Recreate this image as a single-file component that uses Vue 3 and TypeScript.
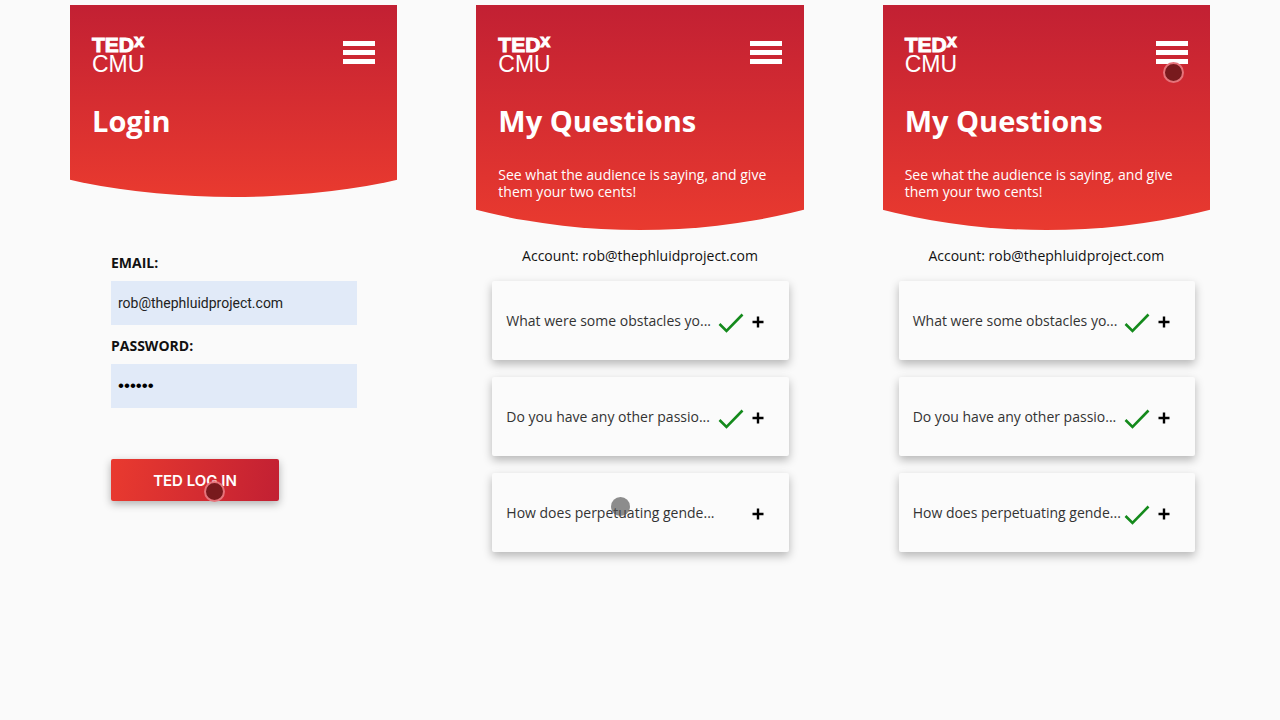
<script setup lang="ts">
import { ref } from 'vue'

interface Question {
  text: string
  answered: boolean
  touched?: boolean
}
interface Screen {
  id: string
  title: string
  kind: 'login' | 'questions'
  menuTouched?: boolean
  questions: Question[]
}

const account = 'rob@thephluidproject.com'
const email = ref(account)
const password = ref('secret')

const makeQuestions = (lastAnswered: boolean): Question[] => [
  { text: 'What were some obstacles yo...', answered: true },
  { text: 'Do you have any other passio...', answered: true },
  { text: 'How does perpetuating gende...', answered: lastAnswered, touched: !lastAnswered },
]

const screens: Screen[] = [
  { id: 'login', title: 'Login', kind: 'login', questions: [] },
  { id: 'before', title: 'My Questions', kind: 'questions', questions: makeQuestions(false) },
  { id: 'after', title: 'My Questions', kind: 'questions', menuTouched: true, questions: makeQuestions(true) },
]
</script>

<template>
  <main class="board">
    <section v-for="screen in screens" :key="screen.id" class="screen">
      <header class="hero">
        <div class="topbar">
          <a href="#" class="logo" aria-label="TEDxCMU">
            <span class="logo-ted">TED<span class="logo-x">x</span></span>
            <span class="logo-cmu">CMU</span>
          </a>
          <button type="button" class="menu" aria-label="Menu">
            <span class="bar"></span>
            <span class="bar"></span>
            <span class="bar"></span>
            <span v-if="screen.menuTouched" class="touch touch-menu"></span>
          </button>
        </div>
        <h1>{{ screen.title }}</h1>
        <p v-if="screen.kind === 'questions'" class="intro">
          See what the audience is saying, and give them your two cents!
        </p>
      </header>

      <form v-if="screen.kind === 'login'" class="login" @submit.prevent>
        <label for="email">EMAIL:</label>
        <input id="email" v-model="email" type="email" />
        <label for="password">PASSWORD:</label>
        <input id="password" v-model="password" type="password" />
        <button type="submit" class="submit">
          TED LOG IN
          <span class="touch touch-submit"></span>
        </button>
      </form>

      <div v-else class="questions">
        <p class="account">Account: {{ account }}</p>
        <ul>
          <li v-for="q in screen.questions" :key="q.text" class="card">
            <span class="text">{{ q.text }}</span>
            <svg v-if="q.answered" class="check" viewBox="0 0 26 20" aria-label="Answered">
              <path d="M1.5 11 8.5 18 24.500 1.500" />
            </svg>
            <button type="button" class="expand" aria-label="Expand">
              <svg viewBox="0 0 12 12"><path d="M6 0.500V11.500M0.500 6H11.500" /></svg>
            </button>
            <span v-if="q.touched" class="touch touch-card"></span>
          </li>
        </ul>
      </div>
    </section>
  </main>
</template>

<style>
body {
  background: #fafafa;
}
</style>

<style scoped>
* {
  box-sizing: border-box;
}
.board {
  display: grid;
  grid-template-columns: repeat(3, 1fr);
  gap: 79px;
  min-height: 100vh;
  padding: 5px 70px 0;
  font-family: "Open Sans", "Noto Sans", sans-serif;
  color: #111;
}
.hero {
  padding: 31px 22px 56px;
  color: #fff;
  background: linear-gradient(#c22033, #e93a2f);
  clip-path: ellipse(121% 100% at 50% 0);
}
.hero:has(.intro) {
  padding-bottom: 30px;
}
.topbar {
  display: flex;
  justify-content: space-between;
  align-items: flex-start;
}
.logo {
  display: flex;
  flex-direction: column;
  color: #fff;
  text-decoration: none;
  font-family: "Liberation Sans", Arial, sans-serif;
}
.logo-ted {
  display: flex;
  font-size: 21px;
  line-height: 18px;
  font-weight: 700;
  -webkit-text-stroke: 1px #fff;
}
.logo-x {
  font-size: 18px;
  line-height: 11px;
}
.logo-cmu {
  font-size: 23px;
  line-height: 20px;
}
.menu {
  position: relative;
  display: flex;
  flex-direction: column;
  gap: 4px;
  width: 32px;
  margin-top: 5px;
  padding: 0;
  border: 0;
  background: none;
}
.bar {
  height: 5px;
  background: #fff;
}
h1 {
  margin: 27px 0 0;
  font-size: 29px;
  line-height: 40px;
  font-weight: 700;
}
.intro {
  margin: 25px 0 0;
  font-size: 14px;
  line-height: 17px;
  font-weight: 500;
}
.login {
  display: flex;
  flex-direction: column;
  padding: 56px 40px 0 41px;
}
.login label {
  font-size: 14px;
  line-height: 20px;
  font-weight: 700;
}
.login input {
  height: 44px;
  margin: 8px 0 11px;
  padding: 0 7px;
  border: 0;
  outline: 0;
  background: #e1eaf8;
  color: #222;
  font-family: Roboto, sans-serif;
  font-size: 14px;
}
.login input[type="password"] {
  color: #000;
  font-family: "Liberation Sans", Arial, sans-serif;
  font-size: 17px;
}
.submit {
  position: relative;
  align-self: flex-start;
  width: 168px;
  height: 42px;
  margin-top: 40px;
  border: 0;
  border-radius: 2px;
  background: linear-gradient(100deg, #e93a2f, #c22033);
  box-shadow: 0 3px 8px rgba(0, 0, 0, 0.3);
  color: #fff;
  font-family: Inter, sans-serif;
  font-size: 15px;
  font-weight: 600;
}
.account {
  margin: 16px 0 15px;
  text-align: center;
  font-size: 14px;
  line-height: 20px;
}
ul {
  display: flex;
  flex-direction: column;
  gap: 17px;
  margin: 0;
  padding: 0 15px 0 16px;
  list-style: none;
}
.card {
  position: relative;
  display: flex;
  align-items: center;
  height: 79px;
  padding: 0 25px 0 14px;
  border-radius: 2px;
  background: #fbfbfb;
  box-shadow: 0 4px 10px rgba(0, 0, 0, 0.28);
}
.text {
  flex: 1;
  color: #333;
  font-size: 14px;
  line-height: 20px;
  white-space: nowrap;
}
.check {
  flex: none;
  width: 26px;
  height: 20px;
  margin: 4px 8px 0 0;
  fill: none;
  stroke: #148a1c;
  stroke-width: 2.6;
}
.expand {
  flex: none;
  width: 12px;
  height: 12px;
  margin-top: 2px;
  padding: 0;
  border: 0;
  background: none;
}
.expand svg {
  display: block;
  fill: none;
  stroke: #000;
  stroke-width: 2.4;
}
.touch {
  position: absolute;
  width: 21px;
  height: 21px;
  border: 2px solid #e5737a;
  border-radius: 50%;
  background: #781a1d;
}
.touch-submit {
  left: 93px;
  top: 22px;
}
.touch-menu {
  left: 7px;
  top: 21px;
}
.touch-card {
  left: 119px;
  top: 24px;
  width: 19px;
  height: 19px;
  border: 0;
  background: rgba(80, 80, 80, 0.65);
}
</style>
